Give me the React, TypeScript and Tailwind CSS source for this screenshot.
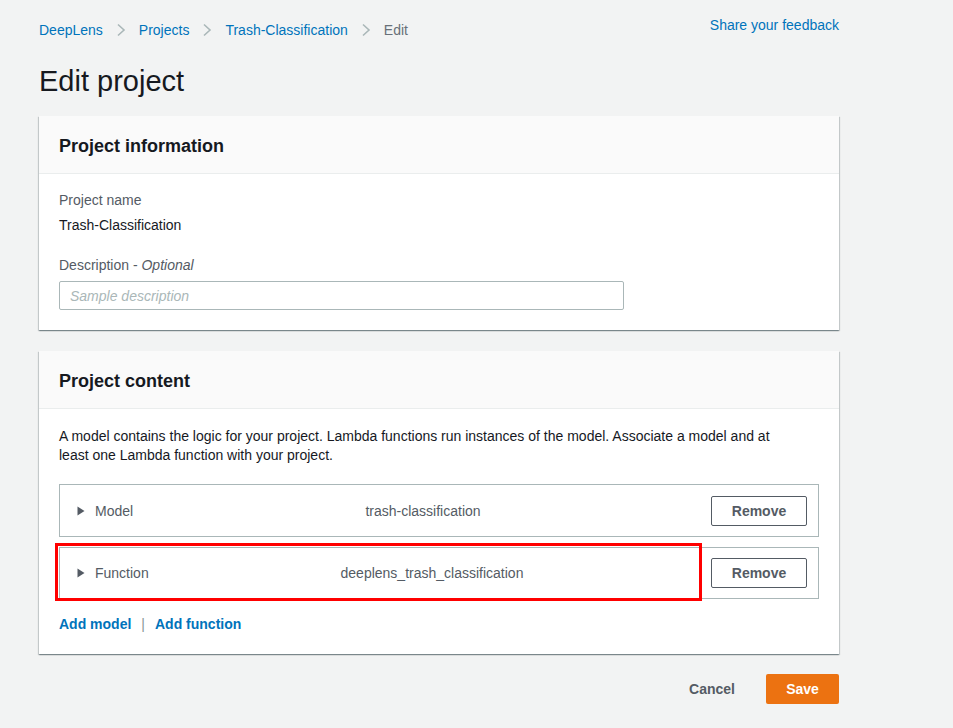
import React from "react"

const Chevron = () => (
  <svg width="10" height="14" viewBox="0 0 10 14" className="mx-[13px]">
    <path d="M2 1.5 L8 7 L2 12.5" fill="none" stroke="#aab7b8" strokeWidth="1.6" />
  </svg>
)

const Caret = () => (
  <svg width="8" height="10" viewBox="0 0 8 10" className="shrink-0">
    <path d="M0.5 0.5 L7.5 5 L0.5 9.5 Z" fill="#545b64" />
  </svg>
)

const cardShadow =
  "shadow-[0_1px_1px_0_rgba(0,28,36,0.3),1px_1px_1px_0_rgba(0,28,36,0.15),-1px_1px_1px_0_rgba(0,28,36,0.15)]"

const Row = ({ label, value, valueShift, h }: { label: string; value: string; valueShift: string; h: string }) => (
  <div className={`flex items-center ${h} border border-[#aab7b8] bg-white pl-[17px] pr-[11px]`}>
    <Caret />
    <span className="ml-[10px] w-[120px] text-[#545b64]">{label}</span>
    <span className={`flex-1 text-center text-[#545b64] ${valueShift}`}>{value}</span>
    <button className="w-[96px] h-[30px] border border-[#545b64] rounded-[2px] bg-white font-bold text-[#545b64] text-[14px]">
      Remove
    </button>
  </div>
)

export default function App() {
  return (
    <div
      className="min-h-screen bg-[#f2f3f3] text-[14px] leading-[20px] text-[#16191f]"
      style={{ fontFamily: '"Liberation Sans", Arial, sans-serif' }}
    >
      <div className="w-[800px] ml-[39px] pt-[15px] pb-[25px]">
        {/* Breadcrumb */}
        <div className="flex justify-between items-start">
          <nav className="flex items-center mt-[5px]">
            <a className="text-[#0073bb]">DeepLens</a>
            <Chevron />
            <a className="text-[#0073bb]">Projects</a>
            <Chevron />
            <a className="text-[#0073bb]">Trash-Classification</a>
            <Chevron />
            <span className="text-[#687078]">Edit</span>
          </nav>
          <a className="text-[#0073bb]">Share your feedback</a>
        </div>

        <h1 className="mt-[23px] text-[29px] leading-[36px] font-normal text-[#16191f]">Edit project</h1>

        {/* Project information */}
        <section className={`mt-[17px] bg-white ${cardShadow}`}>
          <div className="h-[58px] flex items-center px-5 pt-[2px] bg-[#fafafa] border-b border-[#eaeded]">
            <h2 className="text-[18px] font-bold">Project information</h2>
          </div>
          <div className="px-5 pt-4 pb-5">
            <div className="text-[#545b64]">Project name</div>
            <div className="mt-[5px]">Trash-Classification</div>
            <div className="mt-5 text-[#545b64]">
              Description - <i>Optional</i>
            </div>
            <input
              className="mt-[6px] w-[565px] h-[29px] border border-[#aab7b8] rounded-[2px] px-[10px] placeholder:italic placeholder:text-[#aab7b8] outline-none"
              placeholder="Sample description"
            />
          </div>
        </section>

        {/* Project content */}
        <section className={`mt-[21px] bg-white ${cardShadow}`}>
          <div className="h-[58px] flex items-center px-5 pt-[2px] bg-[#fafafa] border-b border-[#eaeded]">
            <h2 className="text-[18px] font-bold">Project content</h2>
          </div>
          <div className="px-5 pt-[18px] pb-5">
            <p className="leading-[19px]">
              A model contains the logic for your project. Lambda functions run instances of the model. Associate a model and at
              <br />
              least one Lambda function with your project.
            </p>
            <div className="mt-[19px] flex flex-col gap-[10px]">
              <Row label="Model" value="trash-classification" valueShift="-translate-x-[40px]" h="h-[53px]" />
              <div className="relative">
                <Row label="Function" value="deeplens_trash_classification" valueShift="-translate-x-[31px]" h="h-[52px]" />
                <div className="absolute left-[-4px] top-[-4px] w-[647px] h-[58px] border-[3px] border-[#ff0000] pointer-events-none" />
              </div>
            </div>
            <div className="mt-[15px] flex items-center font-bold text-[#0073bb]">
              <a>Add model</a>
              <span className="mx-[10px] font-normal text-[#879596]">|</span>
              <a>Add function</a>
            </div>
          </div>
        </section>

        {/* Actions */}
        <div className="mt-5 flex justify-end items-center">
          <button className="font-bold text-[#545b64] mr-[31px]">Cancel</button>
          <button className="w-[73px] h-[30px] rounded-[2px] bg-[#ec7211] text-white font-bold">Save</button>
        </div>
      </div>
    </div>
  )
}
